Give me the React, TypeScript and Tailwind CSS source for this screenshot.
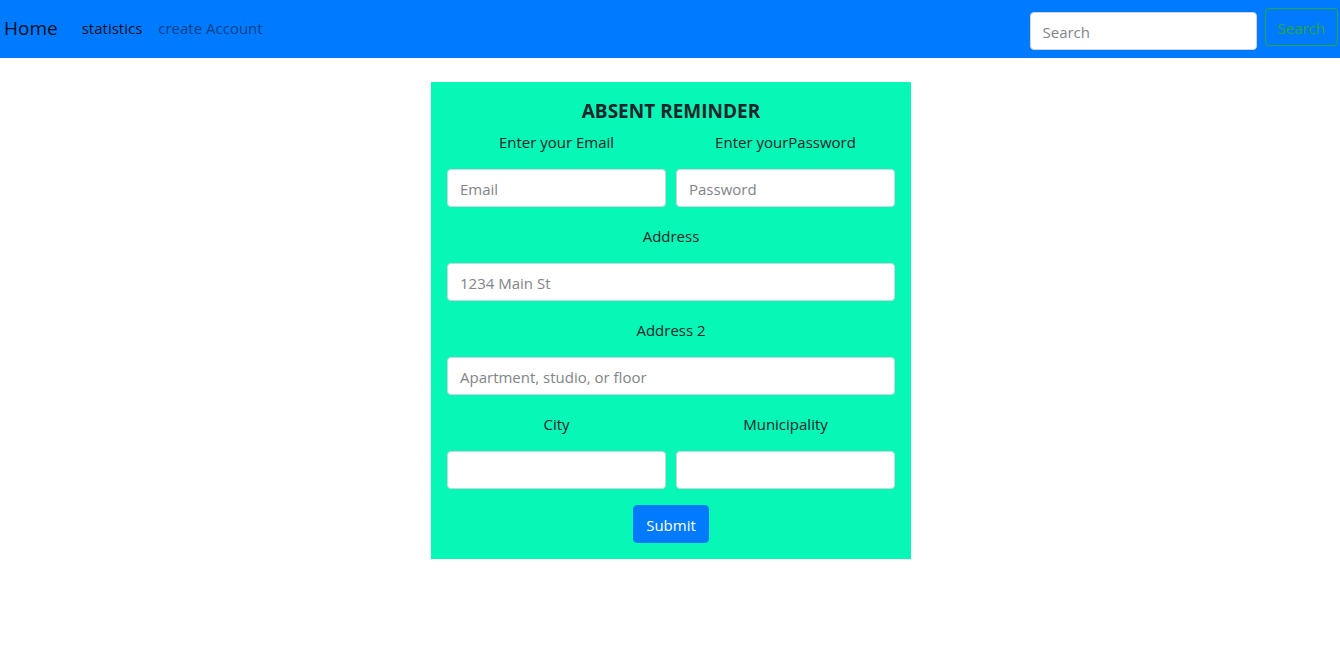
import { useId } from "react";

const controlClass =
  "h-[38px] w-full min-w-0 rounded-[4px] border border-[#ced4da] bg-white px-3 pt-[2px] text-[15px] text-[#495057] placeholder:text-[#808489] focus:outline-2 focus:outline-[#80bdff]";

type FieldProps = {
  label: string;
  placeholder?: string;
  type?: string;
};

function Field({ label, placeholder, type = "text" }: FieldProps) {
  const id = useId();
  return (
    <div className="flex min-w-0 flex-1 flex-col gap-[14px]">
      <label htmlFor={id} className="text-center leading-[26px]">
        {label}
      </label>
      <input id={id} type={type} placeholder={placeholder} className={controlClass} />
    </div>
  );
}

function Navbar() {
  return (
    <nav className="flex items-start justify-between bg-[#007bff] pt-2 pr-[2px] pb-2 pl-1">
      <div className="flex h-10 items-center">
        <a href="#home" className="mr-6 text-[19px] text-black/90">
          Home
        </a>
        <a href="#statistics" className="mr-4 text-black/90">
          statistics
        </a>
        <a href="#create-account" className="text-black/50">
          create Account
        </a>
      </div>
      <form className="flex items-start gap-2" onSubmit={(e) => e.preventDefault()}>
        <div className="mt-1 w-[227px]">
          <input type="search" aria-label="Search" placeholder="Search" className={controlClass} />
        </div>
        <button
          type="submit"
          className="h-[38px] rounded-[4px] border border-[#28a745] px-3 pt-[2px] text-[#28a745]"
        >
          Search
        </button>
      </form>
    </nav>
  );
}

export default function App() {
  return (
    <div className="bg-white font-['Open_Sans','Noto_Sans',sans-serif] text-[15px] text-[#212529]">
      <Navbar />
      <main className="flex justify-center pt-6 pl-[2px]">
        <form
          className="flex w-full max-w-[480px] flex-col gap-4 bg-[#07f7b7] p-4"
          onSubmit={(e) => e.preventDefault()}
        >
          <div>
            <h1 className="mb-1 text-center text-[19px] leading-[27px] font-bold">
              ABSENT REMINDER
            </h1>
            <div className="flex gap-[10px]">
              <Field label="Enter your Email" type="email" placeholder="Email" />
              <Field label="Enter yourPassword" type="password" placeholder="Password" />
            </div>
          </div>
          <Field label="Address" placeholder="1234 Main St" />
          <Field label="Address 2" placeholder="Apartment, studio, or floor" />
          <div className="flex gap-[10px]">
            <Field label="City" />
            <Field label="Municipality" />
          </div>
          <button
            type="submit"
            className="h-[38px] self-center rounded-[4px] border border-[#007bff] bg-[#007bff] px-3 pt-[2px] text-white"
          >
            Submit
          </button>
        </form>
      </main>
    </div>
  );
}
